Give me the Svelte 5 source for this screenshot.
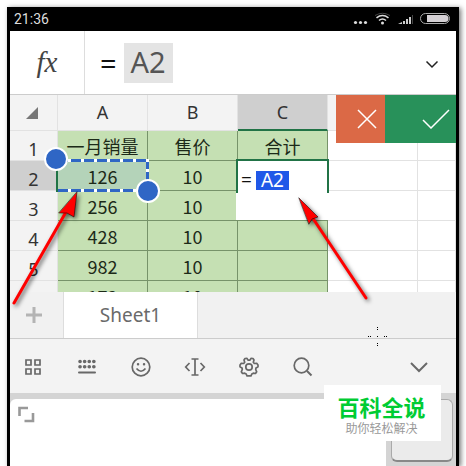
<script lang="ts">
  type Row = { n: number; a: string; b: string; c?: string };

  const columns = ['A', 'B', 'C', '', ''];

  const rows: Row[] = [
    { n: 1, a: '一月销量', b: '售价', c: '合计' },
    { n: 2, a: '126', b: '10' },
    { n: 3, a: '256', b: '10' },
    { n: 4, a: '428', b: '10' },
    { n: 5, a: '982', b: '10' },
    { n: 6, a: '172', b: '10' },
  ];

  let reference = $state('A2');
</script>

<main class="page">
  <div class="phone">
    <header class="status">
      <span>21:36</span>
      <svg class="status-icons" width="98" height="14" viewBox="0 0 98 14" aria-hidden="true">
        <g fill="#ddd">
          <circle cx="2.5" cy="10.5" r="1.6" />
          <circle cx="7.5" cy="10.5" r="1.6" />
          <circle cx="12.5" cy="10.5" r="1.6" />
          <circle cx="29.5" cy="11" r="1.5" />
        </g>
        <path d="M26 8.500q3.500-3 7 0M23.500 5.800q6-4.600 12 0" fill="none" stroke="#ddd" stroke-width="1.600" />
        <path d="M22 3.500q7.500-4.500 15 0" fill="none" stroke="#444" />
        <path d="M45 12l4-2v2zM50 9h2v3h-2zM53 7h2v5h-2zM56 5h2v7h-2z" fill="#ccc" />
        <path d="M59.500 3v9" stroke="#444" />
        <rect x="67.500" y="1.500" width="29" height="10" rx="5" fill="none" stroke="#aaa" />
        <path d="M74 3h18a3.500 3.500 0 0 1 0 7H74z" fill="#d4d0d4" />
      </svg>
    </header>

    <div class="formula-bar">
      <button class="fx" aria-label="插入函数"><i>fx</i></button>
      <div class="formula">
        <span>=</span>
        <span class="chip">{reference}</span>
      </div>
      <button class="expand" aria-label="展开">
        <svg width="14" height="9" viewBox="0 0 14 9"><path d="M1.500 1.500L7 7l5.500-5.500" /></svg>
      </button>
    </div>

    <section class="sheet">
      <table>
        <colgroup>
          <col class="col-head" />
          <col class="col-data" />
          <col class="col-data" />
          <col class="col-data" />
          <col class="col-data" />
          <col />
        </colgroup>
        <thead>
          <tr>
            <th class="corner">
              <svg width="12" height="12" viewBox="0 0 12 12" aria-hidden="true"><path d="M12 0v12H0z" fill="#777" /></svg>
            </th>
            {#each columns as name}
              <th class:active={name === 'C'}>{name}</th>
            {/each}
          </tr>
        </thead>
        <tbody>
          {#each rows as row}
            <tr>
              <th class:active={row.n === 2}>{row.n}</th>
              <td class="filled" class:picked={row.n === 2}>
                {row.a}
                {#if row.n === 2}
                  <span class="ants"></span>
                  <span class="handle start"></span>
                  <span class="handle end"></span>
                {/if}
              </td>
              <td class="filled">{row.b}</td>
              <td class="filled" class:host={row.n === 2}>
                {row.c ?? ''}
                {#if row.n === 2}
                  <div class="editor">
                    <span>=</span>
                    <span class="ref">{reference}</span>
                  </div>
                {/if}
              </td>
              <td></td>
              <td></td>
            </tr>
          {/each}
        </tbody>
      </table>
      <div class="actions">
        <button class="cancel" aria-label="取消">
          <svg width="20" height="20" viewBox="0 0 20 20"><path d="M1 1l18 18M19 1L1 19" /></svg>
        </button>
        <button class="confirm" aria-label="确定">
          <svg width="28" height="20" viewBox="0 0 28 20"><path d="M1 11l8 8L27 1" /></svg>
        </button>
      </div>
    </section>

    <nav class="tabs">
      <button class="add" aria-label="添加工作表">
        <svg width="16" height="16" viewBox="0 0 16 16"><path d="M8 0v16M0 8h16" stroke="#b4b4b4" stroke-width="3" /></svg>
      </button>
      <button class="tab">Sheet1</button>
    </nav>

    <div class="tools">
      <button aria-label="菜单">
        <svg viewBox="0 0 20 20">
          <path d="M3 3h5v5H3zM12 3h5v5h-5zM3 12h5v5H3zM12 12h5v5h-5z" />
        </svg>
      </button>
      <button aria-label="键盘">
        <svg viewBox="0 0 20 20">
          <path d="M3 4.500h.1M7.600 4.500h.1M12.200 4.500h.1M16.800 4.500h.1M3 9.800h.1M7.600 9.800h.1M12.200 9.800h.1M16.800 9.800h.1" stroke-width="3.600" stroke-linecap="round" />
          <path d="M2 15.500h16" stroke-width="2" stroke-linecap="round" />
        </svg>
      </button>
      <button aria-label="表情">
        <svg viewBox="0 0 20 20">
          <circle cx="10" cy="10" r="8.800" />
          <path d="M5.500 11.500q4.500 5.500 9 0" />
          <path d="M7 7.200h.1M13 7.200h.1" stroke-width="2.400" stroke-linecap="round" />
        </svg>
      </button>
      <button aria-label="光标">
        <svg viewBox="0 0 20 20">
          <path d="M6.500 2h7M10 2v16M6.500 18h7M4.500 6L.7 10l3.800 4M15.500 6l3.800 4-3.800 4" />
        </svg>
      </button>
      <button aria-label="设置">
        <svg viewBox="0 0 20 20">
          <path d="M6 1.500L8 1.300 9 3.200H11L12 1.300 14 1.500 15 3 14.300 5.300 15.300 6.500 17.700 6.300 19 8V9.800L17 11 16.700 12.500 17.700 14.800 16.500 16.500 14.300 16.200 12.800 17 12 18.800H8L7.200 17 5.700 16.200 3.500 16.500 2.300 14.800 3.300 12.500 3 11 1 9.800V8L2.300 6.300 4.700 6.500 5.700 5.300 5 3z" stroke-linejoin="round" />
          <circle cx="10" cy="10" r="3.200" />
        </svg>
      </button>
      <button aria-label="搜索">
        <svg viewBox="0 0 20 20">
          <circle cx="8.500" cy="8.500" r="7.300" />
          <path d="M14 14l4.500 4.500" stroke-width="2" />
        </svg>
      </button>
      <button class="hide" aria-label="收起">
        <svg viewBox="0 0 20 20"><path d="M2 6l8 8 8-8" stroke-width="2" /></svg>
      </button>
    </div>

    <div class="keyboard">
      <div class="pad">
        <svg width="17" height="17" viewBox="0 0 17 17" aria-hidden="true">
          <path d="M1.500 10V2H10M15 7v8H6.500" fill="none" stroke="#999" stroke-width="2.600" />
        </svg>
      </div>
      <button class="key" aria-label="按键"></button>
    </div>
  </div>

  <svg class="marks" width="466" height="466" viewBox="0 0 466 466" aria-hidden="true">
    <g class="arrows">
      <path d="M14 303L66 212" />
      <path class="tip" d="M77 192L74 217 67 213 59 213z" />
      <path d="M366 298L312 217" />
      <path class="tip" d="M299 198L318 217 312 219 309 224z" />
    </g>
    <path d="M377.500 327v1M377.500 329v1M368 336.500h1M370 336.500h1M377 336.500h1M384 336.500h1M386 336.500h1M377.500 343v1M377.500 345v1" stroke="#000" />
  </svg>

  <aside class="brand">
    <strong>百科全说</strong>
    <span>助你轻松解决</span>
  </aside>
</main>

<style>
  :global(body) {
    margin: 0;
    background: #fff;
  }

  .page {
    position: relative;
    display: flex;
    box-sizing: border-box;
    min-height: 100vh;
    padding: 7px 7px 0;
    overflow: hidden;
    font-family: 'Noto Sans', 'Noto Sans CJK SC', sans-serif;
    color: #333;
  }

  .phone {
    flex: 1;
    display: flex;
    flex-direction: column;
    min-width: 0;
    border: solid #000;
    border-width: 0 3px;
    background: #f3f3f3;
    box-shadow: 2px 1px 5px #777;
  }

  button {
    display: flex;
    align-items: center;
    justify-content: center;
    margin: 0;
    padding: 0;
    border: 0;
    background: none;
    color: inherit;
    font: inherit;
  }

  button svg {
    fill: none;
  }

  .status {
    display: flex;
    align-items: center;
    justify-content: space-between;
    height: 24px;
    padding: 0 5px 0 4px;
    background: #000;
    color: #ddd;
    font: 14px/24px Roboto, sans-serif;
  }

  .formula-bar {
    display: flex;
    height: 63px;
    border-bottom: 1px solid #ccc;
    background: #fff;
  }

  .fx {
    width: 75px;
    border-right: 1px solid #ddd;
    color: #444;
    font: 29px 'Liberation Serif', serif;
  }

  .formula {
    flex: 1;
    display: flex;
    align-items: center;
    gap: 7px;
    padding-left: 15px;
    color: #111;
    font-size: 29px;
  }

  .chip {
    padding: 0 7px;
    background: #e4e4e4;
    color: #555;
    line-height: 38px;
    padding-bottom: 2px;
  }

  .expand {
    width: 48px;
    padding-top: 4px;
  }

  .expand svg {
    stroke: #222;
    stroke-width: 1.5;
  }

  .sheet {
    position: relative;
    height: 197px;
    overflow: hidden;
    background: #fff;
  }

  table {
    width: 100%;
    table-layout: fixed;
    border-collapse: separate;
    border-spacing: 0;
  }

  .col-head {
    width: 48px;
  }

  .col-data {
    width: 90px;
  }

  th,
  td {
    box-sizing: border-box;
    height: 30px;
    padding: 0;
    border: solid #e2e2e2;
    border-width: 0 1px 1px 0;
    text-align: center;
    line-height: 29px;
  }

  th {
    background: #f3f3f3;
    font-size: 18px;
    font-weight: 400;
  }

  tbody th {
    padding-top: 7px;
    line-height: 22px;
  }

  thead th {
    height: 36px;
  }

  th.active {
    background: #cfcfcf;
  }

  thead th.active {
    border-bottom: 2px solid #217346;
  }

  .corner {
    padding: 0 4px 0 0;
    text-align: right;
  }

  .corner svg {
    margin-right: 15px;
  }

  td {
    padding-top: 1px;
    color: #1c2a18;
    font-family: 'Noto Sans CJK SC', sans-serif;
    font-size: 18px;
    line-height: 28px;
  }

  .filled {
    border-color: #77936a;
    background: #c5e0b3;
  }

  .picked {
    position: relative;
    background: #b4d3b9;
  }

  .ants {
    position: absolute;
    inset: -2px;
    border-left: 2px solid #217346;
    background:
      repeating-linear-gradient(90deg, #2f66c5 0 10px, #fff 10px 13px) 0 0 / 100% 3px no-repeat,
      repeating-linear-gradient(90deg, #2f66c5 0 10px, #fff 10px 13px) 0 100% / 100% 3px no-repeat,
      repeating-linear-gradient(#2f66c5 0 10px, #fff 10px 13px) 100% 0 / 3px 100% no-repeat;
  }

  .handle {
    position: absolute;
    z-index: 2;
    width: 20px;
    height: 20px;
    border: 2px solid #fff;
    border-radius: 50%;
    background: #2f66c5;
  }

  .start {
    top: -14px;
    left: -14px;
  }

  .end {
    right: -13px;
    bottom: -13px;
  }

  .host {
    position: relative;
  }

  .editor {
    position: absolute;
    z-index: 1;
    top: -2px;
    left: -2px;
    right: -2px;
    display: flex;
    gap: 4px;
    box-sizing: border-box;
    height: 61px;
    padding: 10px 5px;
    border-top: 2px solid #217346;
    background:
      linear-gradient(#217346, #217346) 0 0 / 2px 32px no-repeat,
      linear-gradient(#217346, #217346) 100% 0 / 2px 32px no-repeat,
      #fff;
    color: #111;
    font: 19px/19px 'Noto Sans', sans-serif;
  }

  .ref {
    align-self: flex-start;
    padding: 0 5px;
    background: #2058e8;
    color: #fff;
  }

  .actions {
    position: absolute;
    z-index: 3;
    top: 0;
    right: 0;
    display: flex;
    height: 48px;
  }

  .actions svg {
    stroke: #fff;
    stroke-width: 1.5;
  }

  .cancel {
    width: 49px;
    padding-left: 13px;
    background: #db6946;
  }

  .confirm {
    width: 71px;
    padding-left: 30px;
    background: #28915a;
  }

  .tabs {
    display: flex;
    height: 46px;
    border-bottom: 1px solid #ccc;
    background: #f1f1f1;
  }

  .add {
    width: 53px;
    padding-right: 5px;
    box-sizing: border-box;
  }

  .tab {
    width: 135px;
    border: solid #ddd;
    border-width: 0 1px;
    box-sizing: border-box;
    background: #fff;
    color: #6a6a6a;
    font-size: 19px;
  }

  .tools {
    display: flex;
    align-items: center;
    gap: 34px;
    height: 54px;
    padding: 2px 27px 0 13px;
    box-sizing: border-box;
  }

  .tools svg {
    width: 20px;
    height: 20px;
    overflow: visible;
    stroke: #686868;
    stroke-width: 1.7;
  }

  .hide {
    margin-left: auto;
  }

  .keyboard {
    flex: 1;
    display: flex;
    gap: 5px;
    min-height: 67px;
    padding: 6px 3px 0 0;
    background: #d4d4d4;
  }

  .pad {
    flex: 1;
    padding: 7px 8px;
    border-top-left-radius: 6px;
    background: #fff;
  }

  .key {
    width: 62px;
    height: 63px;
    border: 1px solid #aaa;
    border-bottom: 2px solid #888;
    border-radius: 6px;
    background: #ebebeb;
  }

  .marks {
    position: absolute;
    z-index: 4;
    top: 0;
    left: 0;
    pointer-events: none;
  }

  .arrows {
    fill: none;
    stroke: #f00;
    stroke-width: 3;
    stroke-linecap: round;
    filter: drop-shadow(2px 2px 2px rgb(0 0 0 / 0.6));
  }

  .tip {
    fill: #f00;
    stroke: #000;
    stroke-width: 0.5;
  }

  .brand {
    position: absolute;
    z-index: 5;
    right: 25px;
    bottom: 25px;
    display: flex;
    flex-direction: column;
    align-items: center;
    box-sizing: border-box;
    width: 117px;
    height: 56px;
    padding: 8px 2px 0 0;
    background: #fff;
    font-family: 'Noto Sans CJK SC', sans-serif;
  }

  .brand strong {
    color: #0c3;
    font-size: 22px;
    line-height: 26px;
  }

  .brand span {
    color: #999;
    font-size: 12px;
    line-height: 18px;
  }
</style>
